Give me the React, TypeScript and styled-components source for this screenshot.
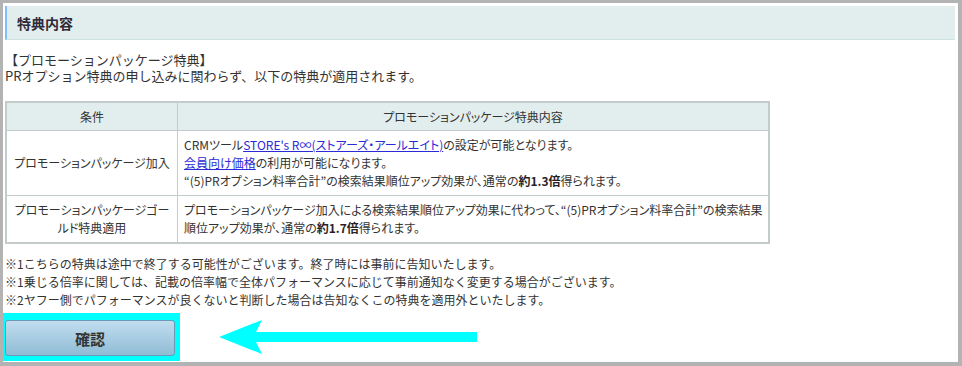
import React from "react";
import styled, { createGlobalStyle } from "styled-components";

const GlobalStyle = createGlobalStyle`
  html, body {
    margin: 0;
    padding: 0;
    background: #fff;
  }
  body {
    font-family: "Noto Sans CJK JP", "Liberation Sans", sans-serif;
    color: #333;
  }
`;

const Frame = styled.div`
  width: 962px;
  height: 366px;
  box-sizing: border-box;
  border: 3px solid #b3b3b3;
  border-right-width: 4px;
  border-bottom-width: 4px;
  padding: 3px 3px 0 2px;
  overflow: hidden;
  background: #fff;
`;

const SectionHeader = styled.h2`
  margin: 0;
  height: 33px;
  display: flex;
  align-items: center;
  padding-left: 10px;
  border-left: 2px solid #7fbfff;
  border-bottom: 1px solid #cfe3e3;
  background: #e2eeee;
  font-size: 14px;
  font-weight: 700;
  color: #2e2a3a;
`;

const Intro = styled.p`
  margin: 12px 0 0;
  font-size: 13px;
  line-height: 16px;
`;

const BenefitTable = styled.table`
  margin-top: 17px;
  width: 765px;
  border-collapse: collapse;
  border: 2px solid #c3cbcb;
  font-size: 12px;
  font-feature-settings: "palt";
`;

const HeadCell = styled.th`
  height: 27px;
  padding: 0 5px;
  background: #e2eeee;
  border: 1px solid #c3cbcb;
  font-weight: 400;
  text-align: center;
`;

const Cell = styled.td<{ $label?: boolean }>`
  padding: ${({ $label }) => ($label ? "5px 6px" : "5px 0 5px 6px")};
  border: 1px solid #c3cbcb;
  line-height: 18px;
  vertical-align: middle;
  text-align: ${({ $label }) => ($label ? "center" : "left")};
  width: ${({ $label }) => ($label ? "158px" : "auto")};
`;

const Link = styled.a`
  color: #2a2ad6;
  text-decoration: underline;
`;

const Strong = styled.b`
  font-weight: 700;
  color: #2b1f26;
`;

const Notes = styled.div`
  margin-top: 11px;
  font-size: 12px;
  line-height: 18px;
`;

const ButtonRow = styled.div`
  display: flex;
  align-items: center;
  gap: 37px;
  margin-top: 4px;
`;

const Highlight = styled.div`
  margin-left: -2px;
  padding: 7px 5px 5px 2px;
  background: #00ffff;
  display: flex;
`;

const ConfirmButton = styled.button`
  width: 170px;
  height: 36px;
  border: 1px solid #6a9ab8;
  border-radius: 3px;
  background: linear-gradient(#c2ddef, #8fbcd5);
  font-family: inherit;
  font-size: 15px;
  font-weight: 700;
  color: #333;
  cursor: pointer;
`;

const Arrow = () => (
  <svg width="262" height="36" viewBox="0 0 262 36">
    <path
      d="M2 18 L45 1 L39 13 L260 13 L260 23 L39 23 L45 35 Z"
      fill="#00ffff"
    />
  </svg>
);

const notes = [
  "※1こちらの特典は途中で終了する可能性がございます。終了時には事前に告知いたします。",
  "※1乗じる倍率に関しては、記載の倍率幅で全体パフォーマンスに応じて事前通知なく変更する場合がございます。",
  "※2ヤフー側でパフォーマンスが良くないと判断した場合は告知なくこの特典を適用外といたします。",
];

export default function App() {
  return (
    <>
      <GlobalStyle />
      <Frame>
        <SectionHeader>特典内容</SectionHeader>
        <Intro>
          【プロモーションパッケージ特典】
          <br />
          PRオプション特典の申し込みに関わらず、以下の特典が適用されます。
        </Intro>
        <BenefitTable>
          <thead>
            <tr>
              <HeadCell>条件</HeadCell>
              <HeadCell>プロモーションパッケージ特典内容</HeadCell>
            </tr>
          </thead>
          <tbody>
            <tr>
              <Cell $label>プロモーションパッケージ加入</Cell>
              <Cell>
                CRMツール<Link href="#">STORE's R∞(ストアーズ・アールエイト)</Link>
                の設定が可能となります。
                <br />
                <Link href="#">会員向け価格</Link>の利用が可能になります。
                <br />
                “(5)PRオプション料率合計”の検索結果順位アップ効果が、通常の
                <Strong>約1.3倍</Strong>得られます。
              </Cell>
            </tr>
            <tr>
              <Cell $label>プロモーションパッケージゴールド特典適用</Cell>
              <Cell>
                プロモーションパッケージ加入による検索結果順位アップ効果に代わって、“(5)PRオプション料率合計”の検索結果順位アップ効果が、通常の
                <Strong>約1.7倍</Strong>得られます。
              </Cell>
            </tr>
          </tbody>
        </BenefitTable>
        <Notes>
          {notes.map((n, i) => (
            <div key={i}>{n}</div>
          ))}
        </Notes>
        <ButtonRow>
          <Highlight>
            <ConfirmButton type="button">確認</ConfirmButton>
          </Highlight>
          <Arrow />
        </ButtonRow>
      </Frame>
    </>
  );
}
